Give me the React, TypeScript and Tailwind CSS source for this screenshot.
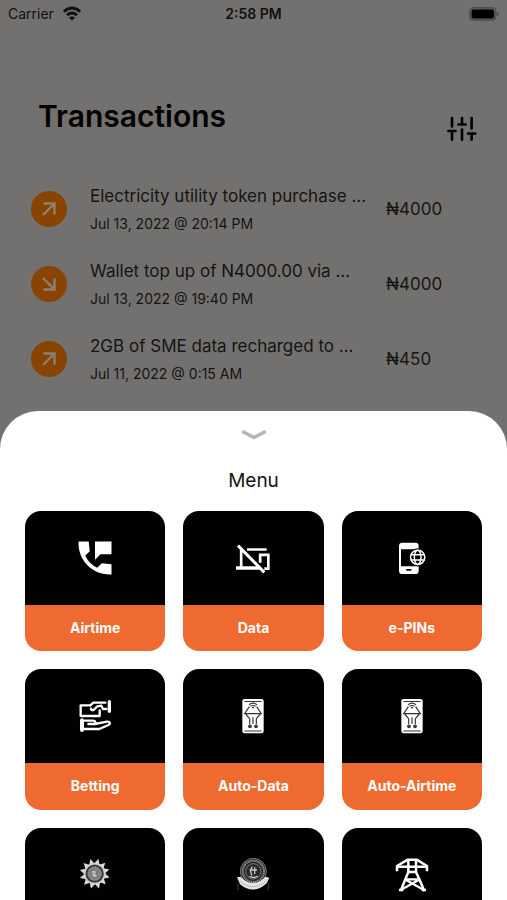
import type { ReactNode } from "react";

interface Transaction {
  id: number;
  title: string;
  date: string;
  amount: string;
  direction: "in" | "out";
}

interface MenuItem {
  id: string;
  label?: string;
  icon: ReactNode;
}

const transactions: Transaction[] = [
  { id: 1, title: "Electricity utility token purchase ...", date: "Jul 13, 2022 @ 20:14 PM", amount: "₦4000", direction: "out" },
  { id: 2, title: "Wallet top up of N4000.00 via ...", date: "Jul 13, 2022 @ 19:40 PM", amount: "₦4000", direction: "in" },
  { id: 3, title: "2GB of SME data recharged to ...", date: "Jul 11, 2022 @ 0:15 AM", amount: "₦450", direction: "out" },
];

function WifiIcon() {
  return (
    <svg width="20" height="16" viewBox="0 0 20 16" fill="none" stroke="currentColor" strokeWidth="2.9" aria-hidden="true">
      <path d="M1.8 5.6Q10-1.8 18.2 5.6" />
      <path d="M5 9.2q5-4.2 10 0" />
      <path d="M10 14.6 6.9 11.5q3.1-2.2 6.2 0Z" fill="currentColor" stroke="none" />
    </svg>
  );
}

function BatteryIcon() {
  return (
    <svg width="30" height="14" viewBox="0 0 30 14" aria-hidden="true">
      <rect x="0.7" y="0.7" width="26.2" height="12.6" rx="3.4" fill="#5d5b59" stroke="#4b4947" />
      <rect x="2.6" y="2.4" width="22.4" height="9" rx="1.8" fill="#000" />
      <path d="M28 5v4q1.6-.6 1.6-2T28 5Z" fill="#4b4947" />
    </svg>
  );
}

function FilterIcon() {
  return (
    <svg width="30" height="26" viewBox="0 0 30 26" fill="none" stroke="currentColor" strokeWidth="2.6" strokeLinecap="round" aria-hidden="true">
      <path d="M5 2v8.5M1.4 15h7.2M5 15v8.7" />
      <path d="M15 2v6.5M11.4 8.5h7.2M15 13.5v10.2" />
      <path d="M24.6 2v10.5M21 17.6h7.2M24.6 17.6v6.1" />
    </svg>
  );
}

function DirectionIcon({ direction }: { direction: "in" | "out" }) {
  return (
    <span className="flex size-9 shrink-0 items-center justify-center rounded-full bg-[#884400]">
      <svg width="18" height="18" viewBox="0 0 18 18" fill="none" stroke="#8d8173" strokeWidth="2.4" aria-hidden="true">
        {direction === "out" ? (
          <path d="M3.5 3.5h11v11M14.5 3.5l-11.5 11.5" />
        ) : (
          <path d="M3.5 14.5h11v-11M14.5 14.5 3 3" />
        )}
      </svg>
    </span>
  );
}

function AirtimeIcon() {
  return (
    <svg width="44" height="44" viewBox="0 0 24 24" fill="currentColor" aria-hidden="true">
      <path d="M21 15.46l-5.27-.61-2.52 2.52a15.05 15.05 0 0 1-6.59-6.59l2.53-2.53L8.54 3H3.03C2.45 13.18 10.82 21.55 21 20.97v-5.51z" />
      <path d="M12 3v10l3-3h6V3h-9z" />
    </svg>
  );
}

function DataIcon() {
  return (
    <svg width="40" height="40" viewBox="42 24 120 120" fill="none" stroke="currentColor" strokeWidth="8" aria-hidden="true">
      <path d="M84 58.5h59" />
      <path d="M66.5 60v50" />
      <path d="M51 114h73" strokeWidth="11" />
      <path d="M123.5 98V74.5h24.5v41.5h-12" />
      <path d="m57 47 79 80" strokeWidth="9" />
    </svg>
  );
}

function PinsIcon() {
  return (
    <svg width="40" height="40" viewBox="52 24 120 120" aria-hidden="true">
      <path fill="currentColor" fillRule="evenodd" d="M83 38h39a10 10 0 0 1 10 10v74a10 10 0 0 1-10 10H83a10 10 0 0 1-10-10V48a10 10 0 0 1 10-10Zm-4 20v51h53V58Z" />
      <rect x="94" y="117" width="17" height="5" rx="2.5" fill="#000" />
      <circle cx="129" cy="82" r="27" fill="#000" />
      <g fill="none" stroke="currentColor" strokeWidth="4.5">
        <circle cx="129" cy="82" r="21.5" />
        <ellipse cx="129" cy="82" rx="10" ry="21.5" />
        <path d="M108 74h42M108 90h42" />
      </g>
    </svg>
  );
}

function BettingIcon() {
  return (
    <svg width="40" height="40" viewBox="46 20 120 120" fill="none" stroke="currentColor" strokeWidth="7" strokeLinejoin="round" strokeLinecap="round" aria-hidden="true">
      <path d="M92 48H63v32h57V63" />
      <path d="M92 48l9-8h36M94 58c0 6 7 6 11 1l8-8 12-2 5 10h10" />
      <path d="M149 37v29" strokeWidth="10" />
      <path d="M67 93v29" strokeWidth="12" />
      <path d="M74 94h26c9 0 9 10 2 10H86M106 104l36-7c9-1 12 6 4 10l-27 12H74" />
    </svg>
  );
}

function AutoIcon() {
  return (
    <svg width="40" height="40" viewBox="42 20 120 120" fill="none" stroke="#333" strokeWidth="3.5" aria-hidden="true">
      <rect x="70" y="29" width="64" height="103" rx="7" fill="currentColor" stroke="none" />
      <path d="M76 36.5h52M76 125h52" />
      <path d="M90 46q12-9 24 0M94 51q8-5 16 0M99 55h6" />
      <path d="M91 52 77 73h50L113 52" />
      <path d="M80 74l12 14v17M124 74l-12 14v17M102 84v20" />
      <circle cx="93" cy="111" r="4" fill="#555" />
      <circle cx="111" cy="111" r="4" fill="#555" />
    </svg>
  );
}

function SunSealIcon() {
  const rays = [0, 30, 60, 90, 120, 150, 180, 210, 240, 270, 300, 330];
  return (
    <svg width="40" height="40" viewBox="46 28 120 120" aria-hidden="true">
      {rays.map((angle) => (
        <path key={angle} d="M95 60 105 41l9 19Z" fill="#dcdcdc" transform={`rotate(${angle + 14} 105 87)`} />
      ))}
      <circle cx="105" cy="87" r="30" fill="#3d3d3d" stroke="#d0d0d0" strokeWidth="5" />
      <circle cx="105" cy="87" r="20" fill="#858585" stroke="#a5a5a5" strokeWidth="3" strokeDasharray="3 2" />
      <path d="M92 81l11-6 12 7-8 4 9 9-12 5-9-7 3-6Z" fill="#b9b9b9" stroke="#4c4c4c" strokeWidth="2" />
    </svg>
  );
}

function BoardSealIcon() {
  return (
    <svg width="40" height="40" viewBox="42 28 120 120" fill="none" aria-hidden="true">
      <circle cx="103" cy="80" r="39" fill="#292929" stroke="#8c8c8c" strokeWidth="2.5" />
      <circle cx="103" cy="80" r="32" stroke="#969696" strokeWidth="6" strokeDasharray="4 2" />
      <circle cx="103" cy="80" r="23" stroke="#7b7b7b" strokeWidth="3" />
      <path d="M100 66q-10 14 0 26M107 68v20M92 76h22M91 95l12 4 13-4" stroke="#c9c9c9" strokeWidth="4" />
      <path d="M54 98l11-2q36 38 75 0l11 3-8 17q-39 36-80 3Z" fill="#e3e3e3" />
      <path d="M65 111q37 30 76-1" stroke="#929292" strokeWidth="3" strokeDasharray="3 3" />
      <path d="M56 116l2 20M149 116l-2 20" stroke="#333" strokeWidth="4" />
    </svg>
  );
}

function PylonIcon() {
  return (
    <svg width="40" height="40" viewBox="52 28 120 120" fill="none" stroke="currentColor" strokeWidth="7.5" strokeLinejoin="round" aria-hidden="true">
      <path d="M67 80V64l32-19h27l31 19v16" />
      <path d="M67 66h90M101 46v37M124 46v37M100 82h25" />
      <path d="M101 82 92 104 78 139M124 82l10 22 15 35" />
      <path d="M94 104h38M94 106l54 30M132 106l-54 30" strokeWidth="6.5" />
      <path d="M73 136h13M141 136h13" />
    </svg>
  );
}

const menuItems: MenuItem[] = [
  { id: "airtime", label: "Airtime", icon: <AirtimeIcon /> },
  { id: "data", label: "Data", icon: <DataIcon /> },
  { id: "pins", label: "e-PINs", icon: <PinsIcon /> },
  { id: "betting", label: "Betting", icon: <BettingIcon /> },
  { id: "auto-data", label: "Auto-Data", icon: <AutoIcon /> },
  { id: "auto-airtime", label: "Auto-Airtime", icon: <AutoIcon /> },
  { id: "result checker", icon: <SunSealIcon /> },
  { id: "exam board", icon: <BoardSealIcon /> },
  { id: "electricity", icon: <PylonIcon /> },
];

function StatusBar() {
  return (
    <div className="grid h-7 grid-cols-3 items-center px-2 text-sm leading-7 text-[#11100f]">
      <span className="flex items-center gap-2">
        Carrier
        <WifiIcon />
      </span>
      <span className="text-center font-semibold">2:58 PM</span>
      <span className="flex justify-end">
        <BatteryIcon />
      </span>
    </div>
  );
}

function TransactionRow({ transaction }: { transaction: Transaction }) {
  return (
    <li className="flex h-[75px] items-center border-b border-[#6e6c6a] pl-[31px]">
      <DirectionIcon direction={transaction.direction} />
      <div className="ml-[23px] w-[296px] shrink-0 pt-0.5">
        <p className="truncate text-[17px] leading-7">{transaction.title}</p>
        <p className="text-sm leading-7">{transaction.date}</p>
      </div>
      <p className="text-[17px] leading-7">{transaction.amount}</p>
    </li>
  );
}

function MenuTile({ item }: { item: MenuItem }) {
  return (
    <button type="button" aria-label={item.label ?? item.id} className="flex aspect-square flex-col overflow-hidden rounded-2xl text-white">
      <span className="flex w-full flex-2 items-center justify-center bg-black">{item.icon}</span>
      <span className="flex w-full flex-1 items-center justify-center bg-[#ee6a31] text-sm font-bold">{item.label}</span>
    </button>
  );
}

export default function App() {
  return (
    <div className="flex h-screen flex-col overflow-hidden bg-[#73716f] font-['Inter',sans-serif] text-[#151413]">
      <StatusBar />
      <header className="flex items-start justify-between pt-[68px] pr-[30px] pl-[38px]">
        <h1 className="text-3xl leading-10 font-semibold text-black">Transactions</h1>
        <button type="button" aria-label="Filter transactions" className="mt-5 text-black">
          <FilterIcon />
        </button>
      </header>
      <ul className="pt-[30px] pb-[14px]">
        {transactions.map((t) => (
          <TransactionRow key={t.id} transaction={t} />
        ))}
      </ul>
      <section aria-label="Menu" className="min-h-0 flex-1 rounded-t-[38px] bg-white px-[25px] pt-4">
        <button type="button" aria-label="Close menu" className="mx-auto flex h-4 items-center text-[#b5b5b5]">
          <svg width="26" height="12" viewBox="0 0 26 12" fill="none" stroke="currentColor" strokeWidth="3.4" strokeLinecap="round" strokeLinejoin="round" aria-hidden="true">
            <path d="M2.5 3 13 8.5 23.5 3" />
          </svg>
        </button>
        <h2 className="mt-6 text-center text-[19px] leading-7">Menu</h2>
        <div className="mt-4 grid grid-cols-3 gap-[18px]">
          {menuItems.map((item) => (
            <MenuTile key={item.id} item={item} />
          ))}
        </div>
      </section>
    </div>
  );
}
